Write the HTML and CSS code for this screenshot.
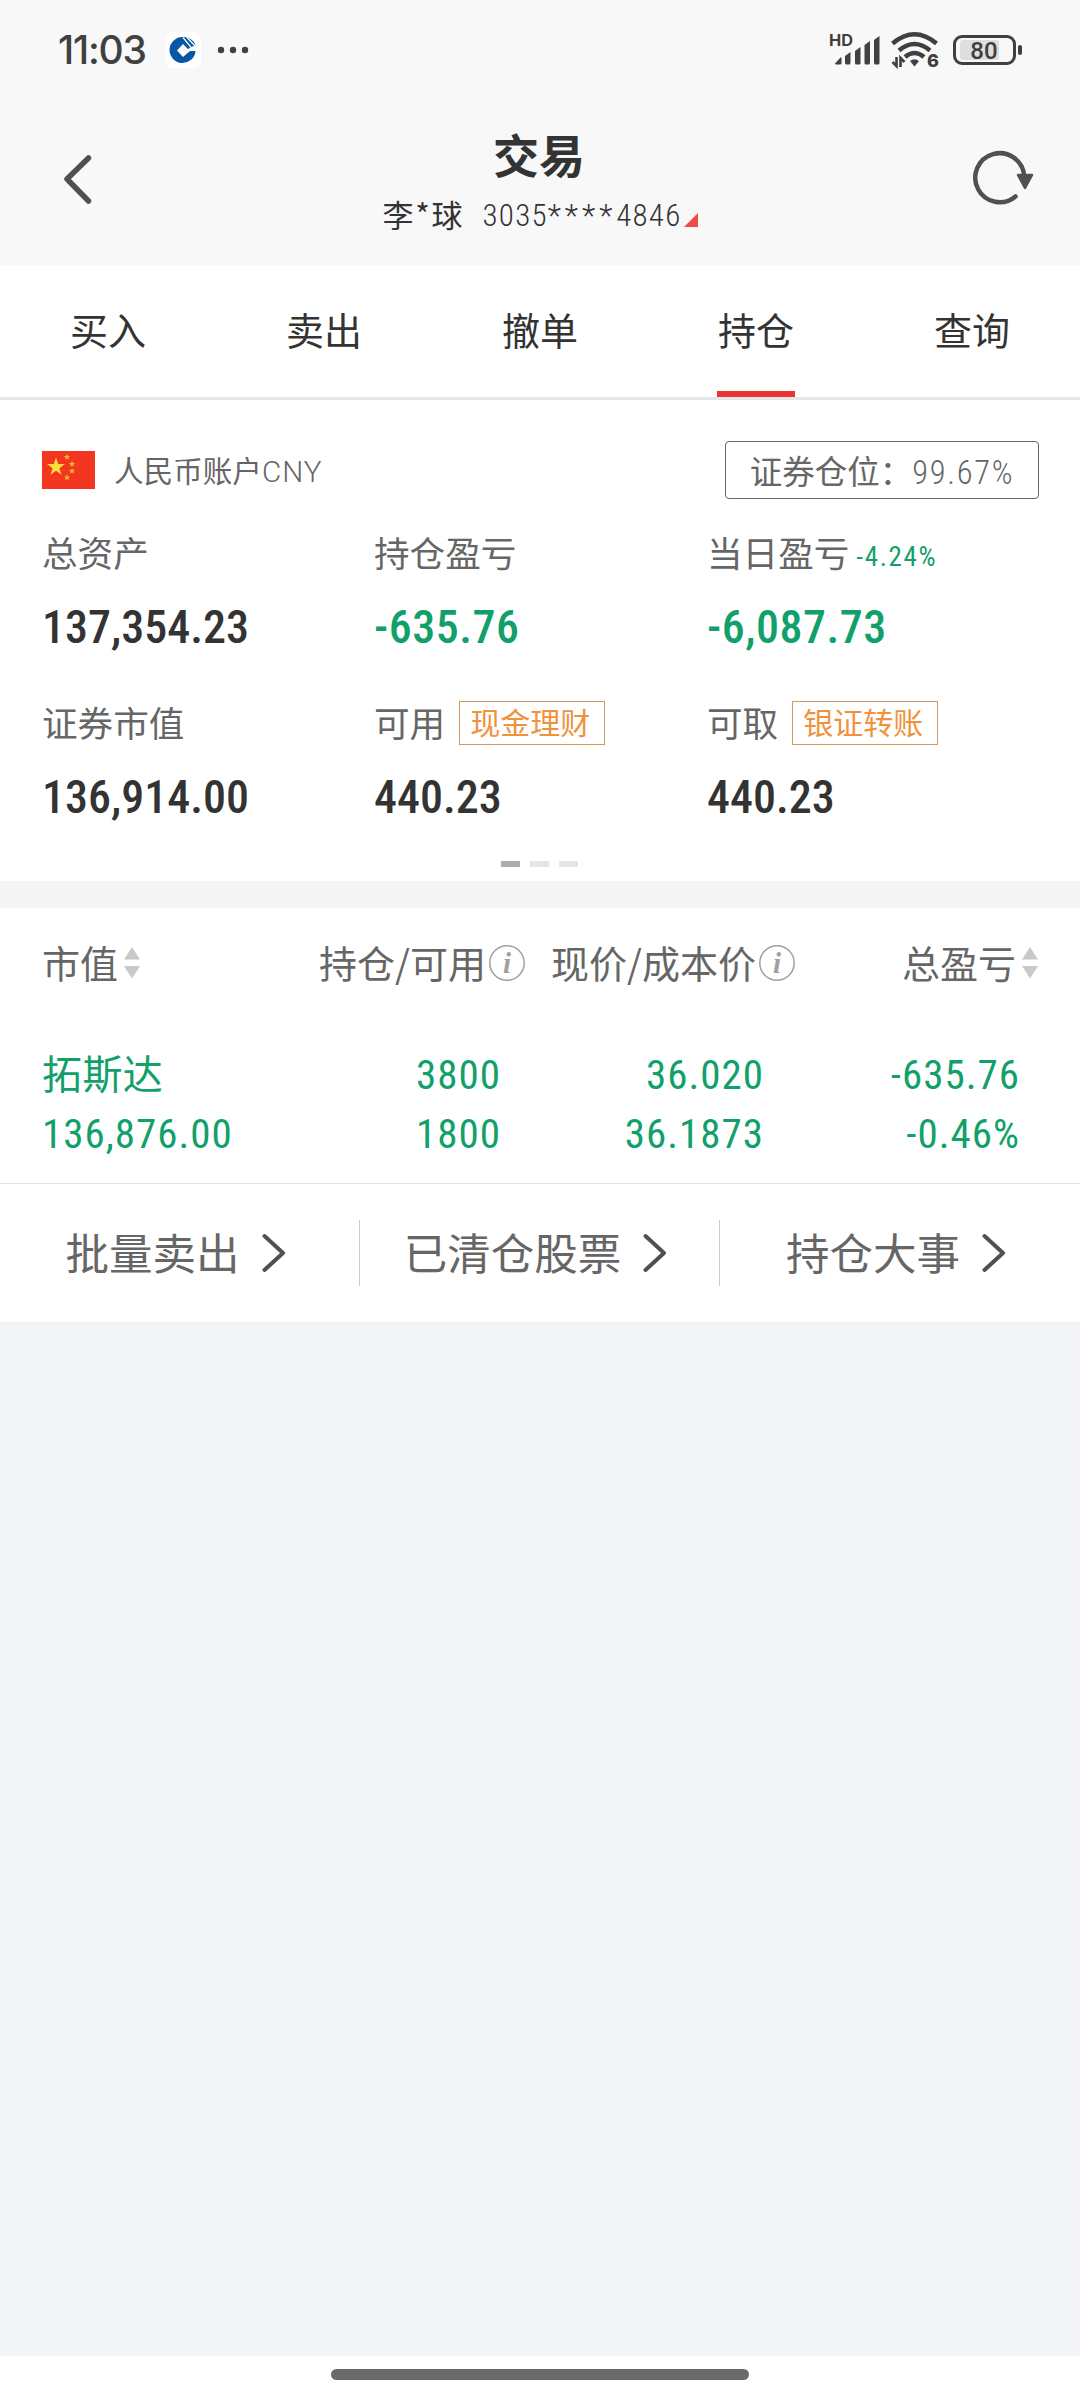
FILE: index.html
```html
<!DOCTYPE html>
<html lang="zh-CN">
<head>
  <meta charset="UTF-8" />
  <meta name="viewport" content="width=device-width, initial-scale=1.0"/>
  <title>交易</title>
  <link rel="stylesheet" href="styles.css">
</head>

<body>
  <div class="app">
    <!-- Status bar -->
    <div class="status-bar">
      <span class="time">11:03</span>
      <svg class="bank-icon" viewBox="0 0 36 36">
        <rect width="36" height="36" rx="7" fill="#fff"/>
        <path d="M18 5A13 13 0 1 0 30.500 19H25L18 25L12 18.500L18 12L23 17L30.500 13A13 13 0 0 0 18 5Z" fill="#0758a4"/>
        <path d="M18 5.500L27 16.500M22 5.500L31 15" stroke="#fff" stroke-width="1.200"/>
      </svg>
      <svg class="dots" viewBox="0 0 32 8" fill="#404040">
        <circle cx="4" cy="4" r="3.200"/><circle cx="16" cy="4" r="3.200"/><circle cx="28" cy="4" r="3.200"/>
      </svg>
      <div class="status-right">
        <svg class="signal" viewBox="0 0 52 36" fill="#404040">
          <text class="hd" x="0" y="14" textLength="24" lengthAdjust="spacingAndGlyphs">HD</text>
          <path d="M6 31.500L11.500 25.500Q12.500 25 12.500 26V31Q12.500 32.500 11 32.500H7.500Q6 32.500 6 31Z"/>
          <path d="M16 24L21.500 20V31Q21.500 32.500 20 32.500H17.500Q16 32.500 16 31Z"/>
          <path d="M26 19L31.500 15V31Q31.500 32.500 30 32.500H27.500Q26 32.500 26 31Z"/>
          <path d="M35.500 13L41 9V31Q41 32.500 39.500 32.500H37Q35.500 32.500 35.500 31Z"/>
          <path d="M45 8L50.500 4V31Q50.500 32.500 49 32.500H46.500Q45 32.500 45 31Z"/>
        </svg>
        <svg class="wifi" viewBox="0 0 48 38" fill="none" stroke="#404040">
          <path d="M1.500 12.500Q23.500 -6 45.500 12.500M8 19.500Q23.500 6.500 39 19.500M14 26Q23.500 18 33 26" stroke-width="4.500"/>
          <path d="M19 30Q23.500 26.500 28 30L23.500 35.500Z" fill="#404040" stroke="none"/>
          <path d="M5.500 26V35L1.500 31M9.500 36V27L13.500 31" stroke-width="2.600"/>
          <text class="wifi-gen" x="36" y="36">6</text>
        </svg>
        <svg class="battery" viewBox="0 0 70 32">
          <rect x="7" y="6" width="39" height="20" rx="3" fill="#dedede"/>
          <rect x="1.500" y="2.500" width="60" height="27" rx="7.500" fill="none" stroke="#404040" stroke-width="3"/>
          <rect x="65" y="11" width="4" height="10" rx="2" fill="#404040"/>
          <text class="battery-text" x="31" y="24.500" text-anchor="middle">80</text>
        </svg>
      </div>
    </div>

    <!-- Title bar -->
    <header>
      <svg class="back" viewBox="0 0 32 52"><path d="M26.500 5L5 26L26.500 48" fill="none" stroke="#505050" stroke-width="5.500" stroke-linecap="round" stroke-linejoin="round"/></svg>
      <div class="title">
        <h1>交易</h1>
        <div class="account">
          <span class="name">李<i>*</i>球</span>
          <span class="num">3035<i>****</i>4846</span>
          <svg class="corner" viewBox="0 0 14 14"><path d="M14 0V14H0Z" fill="#ef4c48"/></svg>
        </div>
      </div>
      <svg class="refresh" viewBox="0 0 62 56">
        <path d="M42.500 46.500A24.500 24.500 0 1 1 51.200 26" fill="none" stroke="#505050" stroke-width="4.500" stroke-linecap="round"/>
        <path d="M45 25H59L52 38Z" fill="#505050" stroke="#505050" stroke-width="2.500" stroke-linejoin="round"/>
      </svg>
    </header>

    <nav class="tabs">
      <a>买入</a>
      <a>卖出</a>
      <a>撤单</a>
      <a class="active">持仓</a>
      <a>查询</a>
    </nav>

    <!-- Assets -->
    <section class="assets">
      <div class="assets-head">
        <svg class="flag" viewBox="0 0 53 38">
          <rect width="53" height="38" fill="#f2361f"/>
          <path d="M14 6.500L16.100 13.100H23L17.400 17.200L19.500 23.800L14 19.700L8.500 23.800L10.600 17.200L5 13.100H11.900Z" fill="#fddc3c"/>
          <g fill="#f5b52e">
            <path d="M25 2.800L25.900 5H28.200L26.400 6.500L27 8.800L25 7.500L23 8.800L23.600 6.500L21.800 5H24.100Z"/>
            <path d="M30 9.800L30.900 12H33.200L31.400 13.500L32 15.800L30 14.500L28 15.800L28.600 13.500L26.800 12H29.100Z"/>
            <path d="M30 16.800L30.900 19H33.200L31.400 20.500L32 22.800L30 21.500L28 22.800L28.600 20.500L26.800 19H29.100Z"/>
            <path d="M25 23.300L25.900 25.500H28.200L26.400 27L27 29.300L25 28L23 29.300L23.600 27L21.800 25.500H24.100Z"/>
          </g>
        </svg>
        <span class="currency">人民币账户<b>CNY</b></span>
        <span class="position">证券仓位：<b>99.67%</b></span>
      </div>
      <div class="asset-grid">
        <div class="asset">
          <div class="label">总资产</div>
          <div class="value">137,354.23</div>
        </div>
        <div class="asset">
          <div class="label">持仓盈亏</div>
          <div class="value down">-635.76</div>
        </div>
        <div class="asset">
          <div class="label">当日盈亏<span class="rate">-4.24%</span></div>
          <div class="value down">-6,087.73</div>
        </div>
        <div class="asset">
          <div class="label">证券市值</div>
          <div class="value">136,914.00</div>
        </div>
        <div class="asset">
          <div class="label">可用<span class="tag">现金理财</span></div>
          <div class="value">440.23</div>
        </div>
        <div class="asset">
          <div class="label">可取<span class="tag">银证转账</span></div>
          <div class="value">440.23</div>
        </div>
      </div>
      <div class="pager"><i class="on"></i><i></i><i></i></div>
    </section>

    <!-- Holdings -->
    <section class="holdings">
      <div class="row head">
        <div class="cell"><span>市值</span><svg class="sort" viewBox="0 0 16 32"><path d="M8 0L16 12.500H0ZM0 19H16L8 31.500Z" fill="#c9c9c9"/></svg></div>
        <div class="cell"><span>持仓/可用</span><svg class="info" viewBox="0 0 36 36"><circle cx="18" cy="18" r="17.200" fill="none" stroke="#a0a0a0" stroke-width="1.500"/><text x="18" y="28" text-anchor="middle">i</text></svg></div>
        <div class="cell"><span>现价/成本价</span><svg class="info" viewBox="0 0 36 36"><circle cx="18" cy="18" r="17.200" fill="none" stroke="#a0a0a0" stroke-width="1.500"/><text x="18" y="28" text-anchor="middle">i</text></svg></div>
        <div class="cell"><span>总盈亏</span><svg class="sort" viewBox="0 0 16 32"><path d="M8 0L16 12.500H0ZM0 19H16L8 31.500Z" fill="#c9c9c9"/></svg></div>
      </div>
      <div class="row stock">
        <div class="cell"><span class="stock-name">拓斯达</span><span>136,876.00</span></div>
        <div class="cell amount"><span>3800</span><span>1800</span></div>
        <div class="cell price"><span>36.020</span><span>36.1873</span></div>
        <div class="cell profit"><span>-635.76</span><span>-0.46%</span></div>
      </div>
      <div class="links">
        <a>批量卖出<svg class="arrow" viewBox="0 0 24 40"><path d="M2.500 3L21 20L2.500 37"/></svg></a>
        <a>已清仓股票<svg class="arrow" viewBox="0 0 24 40"><path d="M2.500 3L21 20L2.500 37"/></svg></a>
        <a>持仓大事<svg class="arrow" viewBox="0 0 24 40"><path d="M2.500 3L21 20L2.500 37"/></svg></a>
      </div>
    </section>

    <footer><div class="home-bar"></div></footer>
  </div>
</body>
</html>
```
FILE: styles.css
```css
* {
  margin: 0;
  padding: 0;
  box-sizing: border-box;
}

body {
  font-family: "Noto Sans CJK SC", sans-serif;
  background-color: #f3f4f8;
  color: #333;
}

i, b {
  font-style: normal;
  font-weight: normal;
}

svg {
  display: block;
  flex: none;
  overflow: visible;
}

.app {
  width: 1080px;
  height: 2400px;
  display: flex;
  flex-direction: column;
  overflow: hidden;
}

/* Status bar */
.status-bar {
  height: 100px;
  padding: 0 57px 0 58px;
  display: flex;
  align-items: center;
  background-color: #f8f8f8;
}

.time {
  width: 107px;
  font: 500 39px/100px Inter, sans-serif;
  letter-spacing: -1.2px;
  color: #404040;
}

.bank-icon {
  width: 36px;
  height: 36px;
}

.dots {
  width: 32px;
  height: 8px;
  margin-left: 16px;
}

.status-right {
  margin-left: auto;
  display: flex;
  align-items: center;
}

.signal {
  width: 52px;
  height: 36px;
  margin-right: 10px;
}

.hd {
  font: 700 16px/1 Inter, sans-serif;
}

.wifi {
  width: 48px;
  height: 38px;
  margin-right: 14px;
}

.wifi-gen {
  font: 800 18px/1 Inter, sans-serif;
  fill: #404040;
  stroke: none;
}

.battery {
  width: 70px;
  height: 32px;
}

.battery-text {
  font: 500 24px Roboto, sans-serif;
  fill: #404040;
}

/* Title bar */
header {
  height: 165px;
  padding: 0 45px 0 62px;
  display: flex;
  justify-content: space-between;
  background-color: #f8f8f8;
}

.back {
  width: 32px;
  height: 52px;
  margin-top: 53px;
}

.refresh {
  width: 62px;
  height: 56px;
  margin-top: 50px;
}

.title {
  display: flex;
  flex-direction: column;
  align-items: center;
}

.title h1 {
  margin: 21px 0 0 11px;
  font-size: 46px;
  line-height: 64px;
  font-weight: 700;
}

.account {
  display: flex;
  align-items: center;
  height: 40px;
  margin: 11px 0 0 14px;
  font-size: 31px;
  line-height: 40px;
}

.account .name {
  margin: -5px 20px 0 0;
}

.account .name i {
  display: inline-block;
  width: 18px;
  text-align: center;
}

.account .num {
  font-family: Roboto, sans-serif;
  font-stretch: 87.5%;
  font-weight: 350;
  letter-spacing: 1.2px;
}

.account .num i {
  font-weight: 350;
  letter-spacing: 4px;
}

.corner {
  width: 14px;
  height: 14px;
  margin: 8px 0 0 3px;
}

/* Tabs */
.tabs {
  height: 135px;
  display: grid;
  grid-template-columns: repeat(5, 1fr);
  justify-items: center;
  background-color: #fff;
  border-bottom: 3px solid #e5e6eb;
}

.tabs a {
  width: 78px;
  height: 132px;
  text-align: center;
  font-size: 38px;
  line-height: 128px;
  white-space: nowrap;
}

.tabs .active {
  border-bottom: 6px solid #e93434;
}

/* Assets */
.assets {
  height: 481px;
  padding: 41px 41px 0 42px;
  background-color: #fff;
}

.assets-head {
  display: flex;
  align-items: center;
  height: 58px;
  color: #666;
}

.flag {
  width: 53px;
  height: 38px;
}

.currency {
  margin: -2px 0 0 19px;
  font-size: 29.600px;
}

.currency b {
  font-family: Roboto, sans-serif;
  font-weight: 350;
  font-stretch: 90%;
  letter-spacing: 1px;
}

.position {
  width: 314px;
  height: 58px;
  margin-left: auto;
  border: 1px solid #666;
  border-radius: 4px;
  text-align: center;
  font-size: 32.500px;
  line-height: 55px;
  white-space: nowrap;
}

.position b {
  font-family: Roboto, sans-serif;
  font-stretch: 87.5%;
  font-weight: 350;
  letter-spacing: 1.700px;
}

.asset-grid {
  display: grid;
  grid-template-columns: 332px 333px 1fr;
  grid-auto-rows: 170px;
  padding-top: 26px;
}

.label {
  display: flex;
  align-items: center;
  height: 52px;
  font-size: 35.600px;
  color: #666;
}

.value {
  height: 92px;
  padding-top: 4px;
  font: 500 46px/92px Roboto, sans-serif;
  font-stretch: 87.5%;
}

.down {
  letter-spacing: 0.5px;
  color: #12a06a;
}

.rate {
  margin: 11px 0 0 7px;
  font: 400 27px/30px Roboto, sans-serif;
  font-stretch: 87.5%;
  letter-spacing: 1.700px;
  color: #12a06a;
}

.tag {
  width: 146px;
  height: 44px;
  margin: 3px 0 0 14px;
  border: 1px solid #d29a58;
  text-align: center;
  font-size: 30px;
  line-height: 39px;
  text-indent: -4px;
  color: #f0923c;
}

.pager {
  display: flex;
  justify-content: center;
  gap: 10px;
  margin-top: -4px;
  padding-right: 2px;
}

.pager i {
  width: 19px;
  height: 6px;
  background-color: #e5e5e5;
}

.pager .on {
  background-color: #adadad;
}

/* Holdings */
.holdings {
  height: 441px;
  border-top: 27px solid #f4f4f4;
  background-color: #fff;
}

.row {
  display: grid;
  grid-template-columns: 200px 283px 270px 1fr;
  padding: 0 42px 0 42px;
}

.head {
  height: 112px;
  font-size: 38px;
  color: #666;
}

.head .cell {
  display: flex;
  align-items: center;
  justify-content: flex-end;
  padding-bottom: 2px;
}

.head span {
  margin-top: -4px;
}

.row .cell:first-child {
  justify-content: flex-start;
}

.sort {
  width: 16px;
  height: 32px;
  margin-left: 6px;
}

.info {
  width: 36px;
  height: 36px;
  margin-left: 3px;
}

.info text {
  font: italic 700 29px "Liberation Serif", serif;
  fill: #a0a0a0;
}

.stock {
  height: 164px;
  padding-top: 26px;
  border-bottom: 1px solid #e2e2e2;
  font: 400 41px/59px Roboto, sans-serif;
  font-stretch: 87.5%;
  letter-spacing: 1px;
  color: #12a06a;
}

.amount,
.price,
.profit {
  text-align: right;
}

.amount {
  padding-right: 24px;
}

.price {
  padding-right: 31px;
}

.profit {
  padding-right: 18px;
}

.stock span {
  display: block;
  height: 59px;
}

.stock .stock-name {
  font: 40px/52px "Noto Sans CJK SC", sans-serif;
  letter-spacing: 0.4px;
}

.links {
  display: grid;
  grid-template-columns: 360px 360px 360px;
  height: 138px;
  align-items: center;
}

.links a {
  display: flex;
  align-items: center;
  justify-content: center;
  height: 66px;
  padding: 0 8px 2px 0;
  border-right: 1px solid #ccc;
  font-size: 43.500px;
  line-height: 60px;
  color: #666;
}

.links a:last-child {
  border-right: none;
}

.arrow {
  width: 24px;
  height: 40px;
  margin: 2px 0 0 22px;
  fill: none;
  stroke: #505050;
  stroke-width: 4;
  stroke-linecap: round;
  stroke-linejoin: round;
}

/* Gesture bar */
footer {
  height: 44px;
  margin-top: auto;
  padding-top: 13px;
  background-color: #fff;
}

.home-bar {
  width: 418px;
  height: 11px;
  margin: 0 auto;
  border-radius: 6px;
  background-color: #6a6a6a;
}
```
